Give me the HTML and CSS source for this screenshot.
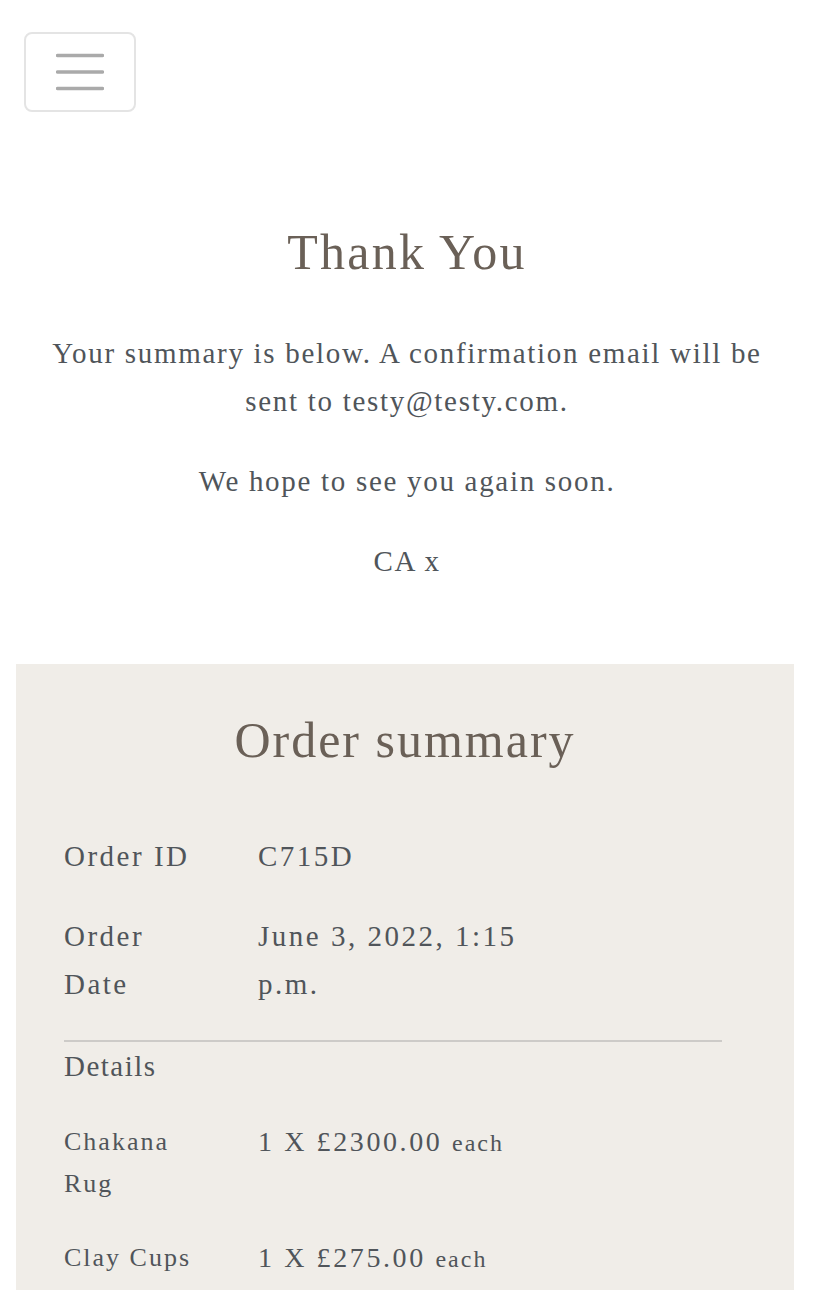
FILE: index.html
```html
<!DOCTYPE html>
<html lang="en">
<head>
<meta charset="utf-8">
<title>Thank You</title>
<link rel="stylesheet" href="styles.css">
</head>
<body>
<header class="topbar">
  <button class="menu-btn" aria-label="Menu">
    <svg width="48" height="38" viewBox="0 0 48 38">
      <path d="M1.5 2.5H46.5M1.5 19H46.5M1.5 35.5H46.5" stroke="#aaaaaa" stroke-width="3.5" stroke-linecap="round"/>
    </svg>
  </button>
</header>
<main>
  <section class="thanks">
    <h1 class="title">Thank You</h1>
    <p class="msg">Your summary is below. A confirmation email will be sent to testy@testy.com.</p>
    <p class="msg">We hope to see you again soon.</p>
    <p class="msg">CA x</p>
  </section>
  <section class="summary">
    <h2 class="title summary-title">Order summary</h2>
    <div class="row">
      <div class="label">Order ID</div>
      <div class="value">C715D</div>
    </div>
    <div class="row">
      <div class="label">Order Date</div>
      <div class="value">June 3, 2022, 1:15 p.m.</div>
    </div>
    <hr class="divider">
    <div class="details-head">Details</div>
    <div class="row item">
      <div class="label">Chakana Rug</div>
      <div class="value">1 X £2300.00 <span class="each">each</span></div>
    </div>
    <div class="row item">
      <div class="label">Clay Cups</div>
      <div class="value">1 X £275.00 <span class="each">each</span></div>
    </div>
  </section>
</main>
</body>
</html>
```

FILE: styles.css
```css
html, body {
  margin: 0;
  padding: 0;
  background: #ffffff;
}
body {
  font-family: "Liberation Serif", "Times New Roman", serif;
  color: #50555a;
}
.topbar {
  padding: 32px 0 0 24px;
}
.menu-btn {
  display: flex;
  align-items: center;
  justify-content: center;
  width: 112px;
  height: 80px;
  padding: 0;
  background: #ffffff;
  border: 2px solid #e4e4e4;
  border-radius: 8px;
}
.thanks {
  text-align: center;
  padding: 110px 48px 0;
}
.title {
  margin: 0;
  font-weight: normal;
  color: #6a6057;
  font-size: 50px;
  line-height: 60px;
  letter-spacing: 2.2px;
}
.msg {
  margin: 0;
  font-size: 29px;
  line-height: 48px;
  letter-spacing: 1.7px;
}
.thanks .title {
  margin-bottom: 47px;
}
.thanks .msg + .msg {
  margin-top: 32px;
}
.summary {
  margin: 79px 20px 0 16px;
  background: #f0ede8;
  padding: 46px 72px 120px 48px;
}
.summary-title {
  text-align: center;
  letter-spacing: 2px;
  margin: 0 -72px 0 -48px;
}
.row {
  display: grid;
  grid-template-columns: 194px 300px;
  padding: 16px 0;
  font-size: 29px;
  line-height: 48px;
  letter-spacing: 2.5px;
}
.summary-title + .row {
  margin-top: 46px;
}
.label {
  max-width: 135px;
}
.divider {
  border: 0;
  border-top: 2px solid #cdcbc8;
  margin: 16px 0 0;
}
.details-head {
  font-size: 29px;
  line-height: 48px;
  letter-spacing: 1.5px;
  padding-bottom: 15px;
}
.row.item {
  font-size: 26px;
  line-height: 42px;
  letter-spacing: 2px;
}
.row.item .value {
  font-size: 28px;
  letter-spacing: 2.6px;
}
.each {
  font-size: 24px;
  letter-spacing: 2px;
}
```
